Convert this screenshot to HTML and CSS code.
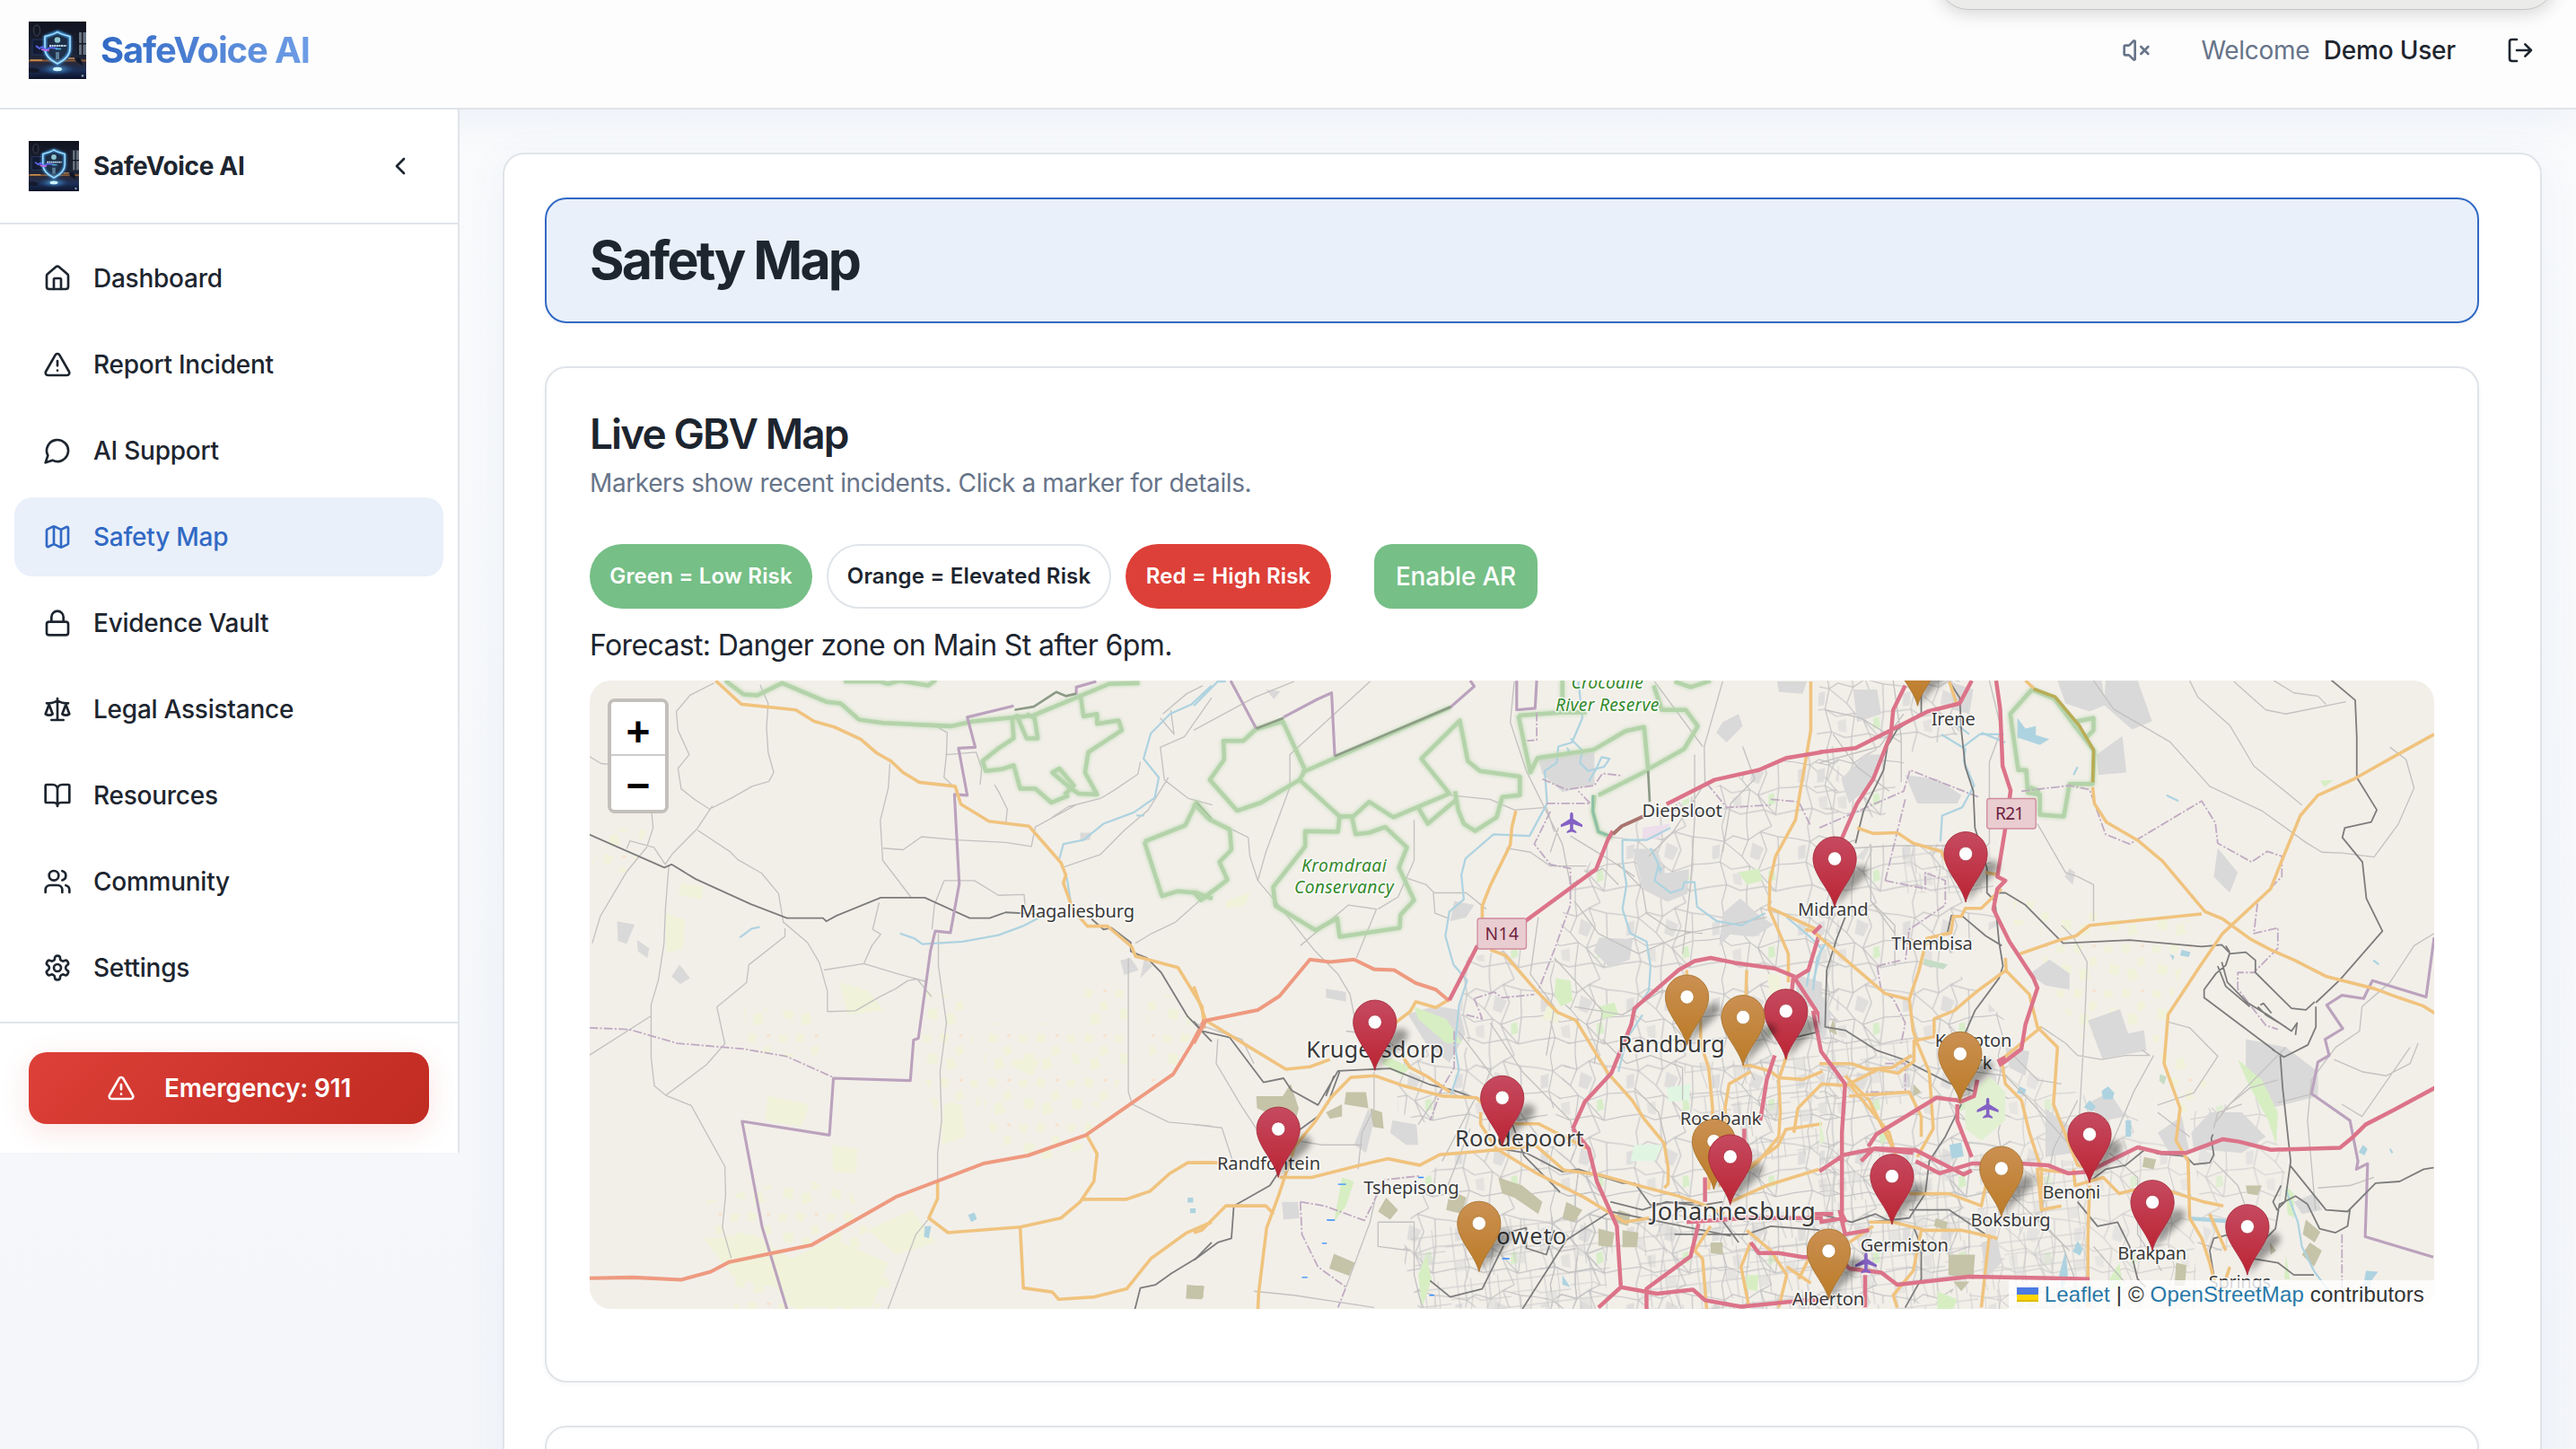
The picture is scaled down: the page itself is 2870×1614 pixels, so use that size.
FILE: index.html
```html
<!DOCTYPE html>
<html lang="en">
<head>
<meta charset="utf-8">
<title>SafeVoice AI - Safety Map</title>
<link rel="stylesheet" href="styles.css">
</head>
<body>
<svg class="defs" width="0" height="0" aria-hidden="true">
  <defs>
    <linearGradient id="room" x1="0" y1="0" x2="0" y2="1">
      <stop offset="0" stop-color="#11131f"/><stop offset=".6" stop-color="#1c2438"/><stop offset=".72" stop-color="#2a2a3a"/><stop offset=".85" stop-color="#1c3058"/><stop offset="1" stop-color="#0b1228"/>
    </linearGradient>
    <radialGradient id="halo"><stop offset="0" stop-color="#4d9be8" stop-opacity=".75"/><stop offset="1" stop-color="#16305c" stop-opacity="0"/></radialGradient>
    <radialGradient id="spot"><stop offset="0" stop-color="#e8fbff"/><stop offset=".3" stop-color="#5ab4f4" stop-opacity=".9"/><stop offset="1" stop-color="#1e5cb0" stop-opacity="0"/></radialGradient>
    <filter id="soft" x="-30%" y="-30%" width="160%" height="160%"><feGaussianBlur stdDeviation="1.3"/></filter>
    <linearGradient id="redPin" x1="0" y1="0" x2="0" y2="1"><stop offset="0" stop-color="#c64a60"/><stop offset="1" stop-color="#bb2433"/></linearGradient>
    <linearGradient id="goldPin" x1="0" y1="0" x2="0" y2="1"><stop offset="0" stop-color="#cb9052"/><stop offset="1" stop-color="#bb7b27"/></linearGradient>
    <filter id="pinBlur" x="-40%" y="-40%" width="180%" height="180%"><feGaussianBlur stdDeviation="8"/></filter>
    <symbol id="logo" viewBox="0 0 64 64">
      <rect width="64" height="64" fill="url(#room)"/>
      <ellipse cx="9" cy="10" rx="3.6" ry="6" fill="none" stroke="#343844" stroke-width="1.4"/>
      <rect x="4" y="20" width="16" height="17" fill="#131b33" stroke="#2c3c66" stroke-width=".8"/>
      <path d="M54 12h10v25h-10z" fill="#66717f"/><path d="M54 12h2v25h-2zM59 12h1.4v25H59zM54 24h10v1.4H54z" fill="#141824"/>
      <path d="M0 42.500h64v2H0z" fill="#8d5b35"/><path d="M2 43h13M44 41h7" stroke="#d39551" stroke-width="1.300"/>
      <path d="M52 44c0-6 7-6 8 5z" fill="#111725"/>
      <ellipse cx="32" cy="30" rx="23" ry="24" fill="url(#halo)" opacity=".45"/>
      <ellipse cx="32" cy="53" rx="20" ry="7" fill="url(#spot)" opacity=".55"/>
      <path d="M32 11.500 46 17v13c0 8-6 13-14 17-8-4-14-9-14-17V17z" fill="#1d2f44" fill-opacity=".6" stroke="#4aa9f5" stroke-width="3" filter="url(#soft)"/>
      <path d="M32 11.500c4 3 9 4 14 5v13.500c0 8-6 13-14 17-8-4-14-9-14-17V16.500c5-1 10-2 14-5z" fill="none" stroke="#a9e2ff" stroke-width="1.500"/>
      <path d="M8 27l4 3 3-2 4 4 5-3 8 1" fill="none" stroke="#5b68ee" stroke-width="2"/><path d="M14 31l4 1 5 0" stroke="#d96be0" stroke-width="1.600" fill="none"/>
      <circle cx="32" cy="20.500" r="3.300" fill="#8fc7cf"/><path d="M23 27h19" stroke="#c2dff0" stroke-width="2.200" stroke-dasharray="2 .6"/><path d="M30 30.500h6" stroke="#51b6de" stroke-width="1.500"/>
      <path d="M30 34h4v8h-4z" fill="#5c7f98"/><ellipse cx="32" cy="53" rx="5" ry="2.200" fill="#cdf4ff"/>
      <circle cx="60" cy="60.500" r="1.400" fill="#8290ad"/>
      <path d="M0 52c5-1 10 0 12 2l-1 3H0z" fill="#141a2c"/>
    </symbol>
    <g id="pinShape"><path d="M0 0C-10-42-54-78-54-119a54 54 0 0 1 108 0C54-78 10-42 0 0z"/></g>
    <g id="shadow"><path d="M0 0C14-36 16-66 36-88c18-20 40-18 46-4 6 18-40 44-60 70z" fill="#000" opacity=".36" filter="url(#pinBlur)"/></g>
    <g id="red"><use href="#shadow"/><use href="#pinShape" fill="url(#redPin)" stroke="#a52b3b" stroke-width="2"/><circle cy="-119" r="17" fill="#fff" stroke="#a52b3b" stroke-width="1.500"/></g>
    <g id="gold"><use href="#shadow"/><use href="#pinShape" fill="url(#goldPin)" stroke="#a9752f" stroke-width="2"/><circle cy="-119" r="17" fill="#fff" stroke="#a9752f" stroke-width="1.500"/></g>
    <path id="plane" d="M0-25c3 0 4 4 4 8v8l23 14v6L4 4v12l8 6v4L0 23l-12 3v-4l8-6V4l-23 7V5L-4-9v-8c0-4 1-8 4-8z" fill="#8461c4"/>
    <pattern id="streets" width="214" height="188" patternUnits="userSpaceOnUse">
      <path d="M110 40l30 14-14 30-22-8zM10 50l20-6-2 34-18 4z" fill="#dfdedd"/><path d="M150 110l14-4 4 26-18 6z" fill="#d8eec9"/><path d="M60 118l22-6 2 34-20-4z" fill="#e4e2df"/>
      <path d="M0 30l40 8 22-14 38 10 30-20 44 12 40 4M0 92l30-4 28 18 46-8 20 14 52-18 38-2M0 150l46-6 34 14 60-10 28 12 46-10M34 0l6 38-10 50 16 56-12 44M96 0l4 34-16 40 20 24-8 60 0 30M158 0l-28 14 16 44-22 54 16 36 18 40M174 26l2 68-8 66M40 38l44 36M124 112l44 48" fill="none" stroke="#c4c4c5" stroke-width="2.600"/>
    </pattern>
    <pattern id="blocks" width="150" height="130" patternUnits="userSpaceOnUse" patternTransform="rotate(-7)">
      <path d="M90 60h24v24H90zM22 86h24v24H22z" fill="#dedddb"/><path d="M0 18h150M0 48h60l14 10h76M0 84h150M20 0v130M54 0v48l-8 36v46M88 18v66l10 46M122 0v58l-8 26v46" fill="none" stroke="#bebec0" stroke-width="2.600"/>
    </pattern>
    <pattern id="farms" width="120" height="110" patternUnits="userSpaceOnUse"><path d="M6 10h24l-4 18H8zM52 4l22 6-6 20-18-4zM88 40l18-4 4 20-20 6zM20 54l26 4-4 26-24-6zM64 70l20-6 8 26-26 6z" fill="#f0f2da"/><path d="M98 8h8v6h-8z" fill="#f8dfc7"/></pattern>
  </defs>
</svg>

<header class="topbar">
  <div class="brand"><svg class="brand-logo" viewBox="0 0 64 64"><use href="#logo"/></svg><span class="brand-name">SafeVoice AI</span></div>
  <div class="account">
    <svg class="icon muted" viewBox="0 0 24 24"><path d="M11 4.702a.705.705 0 0 0-1.203-.498L6.413 7.587A1.400 1.400 0 0 1 5.416 8H3a1 1 0 0 0-1 1v6a1 1 0 0 0 1 1h2.416a1.400 1.400 0 0 1 .997.413l3.383 3.384A.705.705 0 0 0 11 19.298z"/><path d="m22 9-6 6M16 9l6 6"/></svg>
    <p class="welcome">Welcome <strong>Demo User</strong></p>
    <svg class="icon" viewBox="0 0 24 24"><path d="M9 21H5a2 2 0 0 1-2-2V5a2 2 0 0 1 2-2h4M16 17l5-5-5-5M21 12H9"/></svg>
  </div>
  <div class="popover"></div>
</header>

<div class="shell">
  <aside class="sidebar">
    <div class="side-head"><svg class="side-logo" viewBox="0 0 64 64"><use href="#logo"/></svg><span class="side-name">SafeVoice AI</span><svg class="icon" viewBox="0 0 24 24"><path d="m15 18-6-6 6-6"/></svg></div>
    <nav class="nav">
      <a class="nav-item"><svg class="icon" viewBox="0 0 24 24"><path d="M15 21v-8a1 1 0 0 0-1-1h-4a1 1 0 0 0-1 1v8"/><path d="M3 10a2 2 0 0 1 .709-1.528l7-5.999a2 2 0 0 1 2.582 0l7 5.999A2 2 0 0 1 21 10v9a2 2 0 0 1-2 2H5a2 2 0 0 1-2-2z"/></svg>Dashboard</a>
      <a class="nav-item"><svg class="icon" viewBox="0 0 24 24"><path d="m21.730 18-8-14a2 2 0 0 0-3.480 0l-8 14A2 2 0 0 0 4 21h16a2 2 0 0 0 1.730-3M12 9v4M12 17h.01"/></svg>Report Incident</a>
      <a class="nav-item"><svg class="icon" viewBox="0 0 24 24"><path d="M7.900 20A9 9 0 1 0 4 16.100L2 22Z"/></svg>AI Support</a>
      <a class="nav-item active"><svg class="icon" viewBox="0 0 24 24"><path d="M14.106 5.553a2 2 0 0 0 1.788 0l3.659-1.830A1 1 0 0 1 21 4.619v12.764a1 1 0 0 1-.553.894l-4.553 2.277a2 2 0 0 1-1.788 0l-4.212-2.106a2 2 0 0 0-1.788 0l-3.659 1.830A1 1 0 0 1 3 19.381V6.618a1 1 0 0 1 .553-.894l4.553-2.277a2 2 0 0 1 1.788 0zM15 5.764v15M9 3.236v15"/></svg>Safety Map</a>
      <a class="nav-item"><svg class="icon" viewBox="0 0 24 24"><rect width="18" height="11" x="3" y="11" rx="2"/><path d="M7 11V7a5 5 0 0 1 10 0v4"/></svg>Evidence Vault</a>
      <a class="nav-item"><svg class="icon" viewBox="0 0 24 24"><path d="m16 16 3-8 3 8c-.87.65-1.920 1-3 1s-2.130-.35-3-1ZM2 16l3-8 3 8c-.87.65-1.920 1-3 1s-2.130-.35-3-1ZM7 21h10M12 3v18M3 7h2c2 0 5-1 7-2 2 1 5 2 7 2h2"/></svg>Legal Assistance</a>
      <a class="nav-item"><svg class="icon" viewBox="0 0 24 24"><path d="M12 7v14M3 18a1 1 0 0 1-1-1V4a1 1 0 0 1 1-1h5a4 4 0 0 1 4 4 4 4 0 0 1 4-4h5a1 1 0 0 1 1 1v13a1 1 0 0 1-1 1h-6a3 3 0 0 0-3 3 3 3 0 0 0-3-3z"/></svg>Resources</a>
      <a class="nav-item"><svg class="icon" viewBox="0 0 24 24"><path d="M16 21v-2a4 4 0 0 0-4-4H6a4 4 0 0 0-4 4v2"/><circle cx="9" cy="7" r="4"/><path d="M22 21v-2a4 4 0 0 0-3-3.870M16 3.130a4 4 0 0 1 0 7.750"/></svg>Community</a>
      <a class="nav-item"><svg class="icon" viewBox="0 0 24 24"><path d="M12.220 2h-.44a2 2 0 0 0-2 2v.18a2 2 0 0 1-1 1.730l-.43.25a2 2 0 0 1-2 0l-.15-.08a2 2 0 0 0-2.730.73l-.22.38a2 2 0 0 0 .73 2.730l.15.1a2 2 0 0 1 1 1.720v.51a2 2 0 0 1-1 1.740l-.15.09a2 2 0 0 0-.73 2.730l.22.38a2 2 0 0 0 2.730.73l.15-.08a2 2 0 0 1 2 0l.43.25a2 2 0 0 1 1 1.730V20a2 2 0 0 0 2 2h.44a2 2 0 0 0 2-2v-.18a2 2 0 0 1 1-1.730l.43-.25a2 2 0 0 1 2 0l.15.08a2 2 0 0 0 2.730-.73l.22-.39a2 2 0 0 0-.73-2.730l-.15-.08a2 2 0 0 1-1-1.740v-.5a2 2 0 0 1 1-1.740l.15-.09a2 2 0 0 0 .73-2.730l-.22-.38a2 2 0 0 0-2.730-.73l-.15.08a2 2 0 0 1-2 0l-.43-.25a2 2 0 0 1-1-1.730V4a2 2 0 0 0-2-2z"/><circle cx="12" cy="12" r="3"/></svg>Settings</a>
    </nav>
    <div class="side-foot"><button class="emergency"><svg class="icon" viewBox="0 0 24 24"><path d="m21.730 18-8-14a2 2 0 0 0-3.480 0l-8 14A2 2 0 0 0 4 21h16a2 2 0 0 0 1.730-3M12 9v4M12 17h.01"/></svg>Emergency: 911</button></div>
  </aside>

  <main class="content">
    <section class="page-card">
      <div class="panel hero"><h1>Safety Map</h1></div>
      <div class="panel map-panel">
        <h2>Live GBV Map</h2>
        <p class="sub">Markers show recent incidents. Click a marker for details.</p>
        <div class="legend">
          <span class="badge low">Green = Low Risk</span><span class="badge mid">Orange = Elevated Risk</span><span class="badge high">Red = High Risk</span>
          <button class="ar">Enable AR</button>
        </div>
        <p class="forecast">Forecast: Danger zone on Main St after 6pm.</p>
        <div class="map">
          <svg class="map-art" viewBox="0 0 2055 700" width="2055" height="700">
            <!-- western farmland -->
            <g transform="translate(-7 -8) scale(.4464 .4528)" class="tile">
              <path fill="url(#farms)" d="M300 1300l240-60 130 40 110 250-60 40H380zM840 780l120 20 30 260-100 60-60-200zM1000 860l220 0 60 300-200 60-80-120zM60 380l100 0-40 110-110 0zM400 820l220 20-40 110-180-20zM1250 760l110 0 0 200-60 120-60-40zM1400 780l100 20 30 120-110 100z"/>
              <path class="farm" d="M244 515l56 10-4 32-58-12zM205 590l48 16-4 70-42 12zM640 760l70 20 40 50-90 10zM460 1040l104 20-20 56-90-16zM620 1160l64 10-4 60-56-4zM300 1390l120-10 100 60 100-50 140 60-40 110H520l-40-50-100-20zM820 1320l60 80-100 30-70-60zM1070 950l70 0-20 40-50-24zM900 1060l44 0 10 80-60 20z"/>
              <path class="grey" d="M84 610l44 8-20 48-22-8zM134 656l30 20-4 24-24-16zM240 716l26 34-24 14-22-18zM1240 392l28 0-4 18-24 2zM1340 706l26-6 20 30-36 12zM1400 700l20 20-30 30z"/>
              <path class="olive" d="M1506 1504l44 4-6 32-40-2z"/>
              <g class="minor">
                <path d="M326 24l-60 30-34 40 4 46 28 60-28 34 8 50 36 28 35 22 56-28 50-28 42-12 12-22-14-50-4-60 4-60-20-46M14 204l30 18 24 2M170 340l4 40-16 48-50 60-66 110-20 66M108 432l8-20 60 16 28 42 18-26 62-62 38-56M285 386l80 52 20 20 60 34 42 50 12 70 60 50 30 50 20 70 0 50 70-2 60-34 40-20 30-20 24-4 36 44M213 475l-8 100-4 90-14 90-18 60 0 130 8 70 30 24 62 24 84 150 2 70-8 80 22 76M14 940l156-98M207 1037l100-74 46-52-20-90 74-60 6-44 90-70 0-20M600 730l100-16 80 24 74 20M700 714l20-44 22-28-20-12 16-66M765 222l-4 60-20 80 6 98 70 90M748 430l50 4 46-32 90 8 120 6 64 10 10-48 104-56M880 130l28 16-2 54-6 56 24 22M904 200l76-6 14 40-4 40M1026 274l12 20 20 40-4 36M900 510l76 0 60 36 64-2 4 50M900 510l-24 60-6 60M886 640l0 80 20 140-16 120 4 120-10 80 0 74M860 1344l-30 36-70 184M1390 218l-6 30-60 40-34 20-80 20-40 26M1568 60l-68 96-60 26 10 80 60 46 60 16M1360 700l0 330 10 30 90 44 108 10M1378 664l40-24 60-28 90-80M1200 476l90-30 60-60 60-50 50-80M1446 100l60-50 40-20M1440 110l34 40-8-60"/>
              </g>
              <path class="rail" d="M14 396l188 82 18-8 60 36 138 62 90 34 90 0 8 8 26-14 110-44 110 0 112 50 50 0 40-14 80 4M1268 604l30 26 20-4 48 36 0 22 40 16 36 36 66 108 60 62M1568 1400l-40 40-60 36-40 28-38 8-14 54"/>
              <path class="water" d="M1568 30l-50 46-54 24-28 28-20 20-18 62 38 46-10 50-52 36-76 28-50 40-50 10-10 36M790 640l36 12 20 14 100-6 90-16 60-22 40-20M1206 500l10 60M1380 350l20 0M390 650l30-22 20-4"/>
              <path class="lake" d="M960 1332l16-6 6 16-14 8zM852 1360l16 0-6 30-12-4zM1508 1290h14v12h-14zM1514 1316h14v12h-14z"/>
              <g class="park"><path d="M354 18l46 34 34 2 62-30 110 46 36 4 46 40 60 8 170 8 54-12 150-14 190-78 76-2M650 20l90 0 20 6 30-8 70 12 20-14M1070 110l4 50-40 26-38 30 8 24 40-4 30-10 16 58 38 0 40 34 44-18M1240 50l8 56 34-6 0 24 54-8 8 24-84 54-8 50 30 54-46-2-26-18-40-34 18-10 36 42-14 14-10 8M1080 100l26 60 28 0-8-50-20-10M1400 414l102-40 28-56 34 40M1400 414l44 134 40-12 46 4 40 14"/></g>
              <g class="bound"><path d="M1280 20l-50 14 0 18M1074 80l-116 28 20 74-42 2 22 116-32-2 12 220-22 120-38-4-12 50-30 214-12 4-8 100-192-6-10 140-218-34 50 260 62 202"/></g>
              <path class="darkpark" d="M1076 90l48-8 56-36 24 10 26-6M1530 320l38 40"/>
              <path class="bounddash" d="M14 872l100 4 120 34 166 14 106 18 118 52"/>
              <path class="sec" d="M330 18l64 58 136 14 46 28 50 14 66 30 40 34 36 20 30 28 40 24 90 10 14 44 70 42 100 12 80 90 12 30-6 20 24 66 36 40 50 0 60 50 10 24 106 28 60 96 6 54M884 1248l0 44-22 48 48 36 180-14 102-22 48-40 34-50 8-68-28-50M1244 1294l110 0 60-20 50-44 44-26h60M1090 1362l8 150 72 10 16 18 90-6 80-20 60-74 90-64 62-26"/>
              <path class="trunk" d="M14 1488l110-2 120 6 74-20 46-24 206-42 210-118 218-82 112-20 144-50 218-150 46-74 32-60"/>
            </g>

            <!-- central area -->
            <g transform="translate(673 -8) scale(.4464 .4528)" class="tile">
              <path fill="url(#streets)" d="M930 540l120-150 200-90 300-120 60 0v1384H880l-20-120 60-200-20-140 40-240-40-160z"/>
              <path fill="url(#streets)" d="M640 1180l300-20 100 180-60 220H560l-40-130 40-170zM500 920l190 0 180 180-200 40-160-60z"/>
              <path fill="url(#streets)" d="M680 700l200-40 60 160 0 200-120 140-160-300z"/>
              <path fill="url(#blocks)" d="M540 1380l220-40 200 0 90 60-30 164H560zM1100 1340l460-20v244h-440zM1220 960l340-20v240l-280 40z" opacity=".6"/>
              <path class="grey" d="M860 210l140-16 0 80-80 18-50-44zM1096 432l60 0 20 60 60-10-4 60-50 20-60-30zM1320 590l44-36 50 44 34 20-50 30-60-6-26 30zM1012 650l84 4-8 50-50 20-40-40zM534 838l70-20 60 10 14 60-40 70-60-50zM496 1100l60 10 4 50-30 0-40-30zM330 776l50 8 0 24-50-10zM1456 20h74l-10 30-60-4zM1320 120l40-20 10 30-40 40-26-24zM400 1160l36-90 14 30-20 80zM650 560l50 10-20 30-40 10zM1500 740l68 20v70l-60-20zM220 1300l40 0 4 40-40 4zM180 40l36 4-16 20z"/>
              <path class="olive" d="M156 1040l66 0 20-30 20 60-10 40-60-10-10-20-24-10zM380 1030l50 0 6 40-60-10zM440 1070l30 10 4 40-26-4zM480 1290l30 30-20 24-30-20zM350 1428l52 22-14 32-50-18zM640 1270l40 20-10 40-40-10zM760 1240l60 20 50 40-10 30-60-40-30-10zM1060 1320l30 10-6 30-34-10zM1010 1366l40 10-6 36-34-4zM1070 1370l40 6-4 36-36 0zM0 1506h24v30H0zM930 1300l40 20-20 30-30-10zM330 1080l40-20 0 30-30 6zM1290 1400l30 0 0 30-30-4z"/>
              <path class="green" d="M550 820l80 30 40 60-40 0-70-60zM904 750l36 6 6 50-30 14-16-30zM1010 820l40-10 10 30-40 10zM480 940l60 30-20 20-50-30zM1380 1480l30 0-4 40-30-6zM560 1480l20-50 14 60-24 70zM1360 490l50-10 10 30-40 10zM370 1240l30 10-20 60-30 40z"/>
              <path fill="#e0f6e3" d="M1180 1020l60-10-4 40-50 4zM1100 1160l70 0-20 40-60 0z"/>
              <path class="farm" d="M80 560l60-20-10 30-50 10zM880 820l30 0 0 40-40-10zM1430 740l30 0 10 60-30 0z"/>
              <path fill="#ecdeea" d="M1120 380l70-10-30 36-40 6z"/>
              <g class="minor"><path d="M250 20l-100 40-150 80M440 20l-200 180 0 80-60 160-20 70M160 510l-20-60-4-46-40-20M160 510l60 70 80 100 60 60 30 50 10 50 40 60M406 700l50-120-70-10-120 100M550 360l0 100-40 90-50 30M520 500l60 20 20 20 80 0 50 40M598 540l4 50 36 14M640 300l100 10 60 26 80-6 20 60M800 20l-10 100 40 120 60 120 30 60 20 100 80-40 40 40M1320 20l-46 160 2 90-80 120-60 60M1150 20l120 160M780 430l60 10 50 34 90 0M890 440l20-60M950 560l60 80 100 50 120-50 200-40M1060 470l60 60 10 60 60 40 80 10M1250 200l0 160-10 160-20 170M1370 180l30 80-60 60-20 120M940 400l100 60 60 40M0 860l120 40 30 60M380 880l80 10 60 40M60 900l-4 60 60 100 40 60M0 1110l70 8 30 90M260 1150l60 10 100 0M450 980l0 90-30 60-10 90M460 1350l90 0 0 130 20 80M460 1350l0 60 80 10M150 1520l100 10 200 30M380 1510l60-160 20-90M560 1110l60-90 40 20M620 1200l80-150M690 1120l-60 150M740 860l80 120 120 120 10 50M660 880l200 260M860 600l-20 140 60 80-20 120M900 700l120 130-20 130M950 820l120 20 100-60 60 20M1020 900l60 60 60-20 80 30 0 80M1100 1020l60 60 20 80M1360 860l0 60 40 80"/></g>
              <path class="rail" d="M0 856l20 24 70 16 84 110 50-10 20 30 66 36 50-84 130-6 100 40 60 14 70 26 44 10 30 44 30 80 60 60 30 30M330 1040l20-50M334 1060l30-80M210 1230l-20 30-90 50-6 80-34 10-60 44M770 1170l60 10 90 46 40-6 110 34 30 0 40 54 40-6 70 0M820 1564l110-170 110-70 100 20 200 40M590 1494l50 40 80-20 70-140 40-10 0 50 50 16 20-60M1040 1300l80 20 60-20 80 10 60-10M240 1140l70-50M1200 1380l180 0 60-20 130 10M1480 900l88-20M1300 1320l60 80"/>
              <path class="water" d="M0 80l60-60 20 0M960 20l10 90-26 60-34 10-4 40-30 20 6 80-44 80-90-4-70 60-10 40 6 60-36 30-10 60 20 70 34 40-20 60-10 100 10 60-20 60M940 160l30 30-6 30 20 20 40-10 14-20-20-4-14 30-18 30M1190 380l-60 30-60 0 0 50 10 60-10 60 20 60 40 20 10 60-4 60-40 60M1140 430l20 40-10 40 40 30 30-10 4-16 26 0 6 60 50 36 60 10 60-30M1060 980l20-80 40-60M1480 600l60 50 30 30M1540 700l-10 70"/>
              <path class="lake" d="M930 180l10 10-6 12zM1156 470l14 10-6 14zM920 1480l20 30-20-6z"/>
              <path fill="none" stroke="#2f8cff" stroke-width="3" d="M360 1257h20M332 1345h20M270 1486h14M320 1402h12M560 1240h14M588 1530h12M770 1440h18"/>
              <g class="park"><path d="M74 166l50 0 30-28 68-20 56 120-14 24-96 56-60 20-68-76 36-50zM264 262l100 90 34 0 40-36 60 38 140-58-70-86 96-94 20 100 30 24 100 14 0 46-44 4-14 50-54 34-28-18-14-34-8-46M640 84l-370 160M560 330l24 40 70-58M364 350l-4 40-82-2 0 38-80 100 6 46 100 60 54-30 6 46 150-22 2-32 34-36-38-80 20-50-54-50-40 14-34 4-10-46M0 320l40 40 50 24 4 50-30 30 20 44-66 50-18-20M810 104l110-8 0-80M810 104l30 140 18-36 140-20 80-46 46-10 10 104 90-50 34-56-30-40-60 0-20-60M1200 20l40 14 50-16M1010 300l120-60M920 96l60 0M1000 300l-4 40 14 50 34 14"/></g>
              <path class="darkpark" d="M1134 240l4 76"/><path d="M996 300l0 40 14 50 34 12" fill="none" stroke="#8bbfa7" stroke-width="6"/>
              <g class="bound"><path d="M92 18l64 118M224 108l84-44 36-16 8 156M640 84l60-52-10-14M806 18l0 72 46-4 4-68"/></g>
              <path class="darkpark" d="M156 136l68-26M352 204l290-122"/>
              <path class="bounddash" d="M856 96l0 68-24 2M870 260l60 26 70-10 20-30 50 6M880 320l110 0-30-30M890 340l-40 80 40 50 50 10 0 90-40 110-40 100M700 800l50-16 20 14 80-8M700 800l20 50-40-10M650 880l0 90-30 50-30 80M266 1300l60 10 100 36 50-100 90-10M266 1300l4 80 40 80 70 50-20 50M1280 270l50 60 110-6M1440 310l70 6 30 60"/>
              <path class="sec" d="M804 338l-10 40-4 44-50 100-20 50 0 70M740 680l38 14 80 90 50 50 46 20 80 130 60 66 30 46 50 60 10 60 0 40-10 10M1540 20l0 120-28 160-10 60-50 90-14 60-2 70 48 110 0 70M1436 576l132 60M0 770l30 84 100 60 100 60 60-6 50-18M500 862l40-30 14-24 50 14 34-20M452 990l-60 4-50 50-40 60-50 60-40 120-30 80-20 160-6 130M452 990l70 24 100 26 84 4 50 50M520 940l20 30 40 20 60 40M214 1240l80 0 120-30 70-16 80 16 50-26 100-8 140-14 70 60 90 12 110 30 80 20 60 20 60 26M716 1080l0 30 40 60 100 60 120 60 100 60 60-10M800 1108l60 0 120 60M0 1376l20-6 60-60 100 0 20 20M0 1204h80M1230 730l4 60M1380 730l-2 70-8 150M1265 830l0 80 20 60 10 100-10 200M1480 940l-20 60 4 80-4 60-50 60-60 50-40 10M1370 965l20 0 50 14 20 16 60 4 50-20M1390 980l-54 30-10 60 10 120M1568 1108l-90 14-20 40-70 50-40 30M1340 1300l90-40 130-40M1290 1360l-40 60 20 20 10 124M1380 1370l60 50 40 60-20 80M1390 1400l-24 60 20 100M0 1204l60 0M1540 1430l-30 60M1540 1500l-60-40"/>
              <path class="trunk" d="M0 910l30-56 130-26 54-34 76-90 50 6 60-6 50 24 50 2 54 32 50 16 34 28"/>
              <path class="mot" d="M638 804l70-134M824 612l180-130 30-74 12-20M1180 322l120-60 110-24 70-30 88-14M946 1120l30-66 66-70 50-120 8-40 110-94 40-22 40-8 60 12 100 14 50 20M1500 750l34-20 34-110M1496 750l-4 40M1500 750l60 90 10 40M1450 940l-20 60-16 100M1374 1120l0 60M946 1120l40 50 20 80 50 110 10 150-56 50M1066 1510l90 16 90-10 30 26 90 16 160-16 50 0M1130 1564l0-50 110-80 20-80M1276 1240l0 60M1390 1400l20 26 50 0 60 10 50 0M1230 1350l150-10 190 0"/>
              <path fill="none" stroke="#a9746e" stroke-width="9" d="M1046 396l22-20 54-24"/>
            </g>

            <!-- eastern area -->
            <g transform="translate(1363 -8) scale(.4464 .4528)" class="tile">
              <path fill="url(#farms)" d="M560 580l420 30-60 120-60 180-180 0-100-160zM860 920l60 160 60 0 0-120zM500 560l60 0 0 60-60 0z"/>
              <path fill="url(#streets)" d="M16 18h350l0 130-130 50-60 160-70-10-20 0-86-20zM140 420l300 0 20 200-200 120-240 0-20-180zM16 620h60l300 130 100 100 20 300-160 400H16z"/>
              <path fill="url(#streets)" d="M480 960l300 120 160 100 20 384H400l-80-300zM940 1080l180-40 60 180-40 200-160 0z" opacity=".7"/>
              <path fill="url(#blocks)" d="M16 1180l340-10 60 394H16zM400 1180l250 20 60 364H430zM180 430l190 0 60 110-200 0zM40 900h200l40 160H30z" opacity=".55"/>
              <path class="grey" d="M610 18l110 0 10 60-40 16-60-20zM730 18l80 0 36 100-50 20-70-60zM708 200l64-46 10 90-70 6zM540 740l50-36 50 34 0 40-60-10zM686 854l80-28 20 60 40-8 6 50-110 20zM1010 430l50 60-20 50-40-40zM1080 900l100 20 80 60 0 60-120 30-60-80zM990 1080l80 0 60 60-60 40-120-10-6-40zM230 250l80 10 60 40-10 20-100 0zM580 1070l70 50 0 60-70 10zM680 1060l60-30 40 60-50 10zM1200 1300l50-20 20 40-50 10zM130 200l40 0-30 80-50 40-20-60zM640 480l14 10-6 30-20-20zM420 1400l40-10 10 60-40 40zM860 1130l60-40 20 90-50 0zM480 920l60 10-10 60-40-20zM16 780l30 60-20 60-10 0zM100 40l60 0 10 60-60 20zM340 20l60 20-10 60-40-10z"/>
              <path class="olive" d="M338 1430l66 0-4 60-62-10zM1080 1260l40 0-10 24-26-4zM1230 1344l36 30-14 26-30-20zM1240 1400l30 20-20 40-30-30zM906 1450l26 6-4 50-26 0zM306 1340l30 10-4 20-30-10zM826 1190l30 6-6 24-28-6zM40 880l10-30 10 40zM250 1010l20 20-20 10zM1140 1400l16 20-14 10zM350 1496l40 0-20 24z"/>
              <path class="green" d="M310 1520l50 20-10 24h-40zM740 1490l24-40 10 60-30 6zM1060 950l60 50 40 80-4 80-20-60-50-90zM1180 1260l20 20 0 60-16-10zM1180 1430l10 60-14 0zM160 1120l30 20-20 20zM1266 264l34-2-24 18z"/>
              <path fill="#e2f0d2" d="M380 1050l60-60 40 40 0 70-60 50-40-30zM16 1090l14 60-14 10z"/>
              <path fill="#c5dcc6" d="M276 702l60 14-10 12-50-12zM866 986l16 6-6 20-12-10z"/>
              <path class="lake" d="M510 110l20 26 26-6 0 22 34 10-24 14-56-18zM736 1016l16 16-4 16-24 0-4-20zM516 1016l16 8-6 14-18-6zM690 1050l16 16-10 12-20-10zM340 1160l30-6 6 34-30 6zM1372 1160l12 10-8 16-14-8zM660 1396l14 20-8 16-18-10zM920 680l22 6-4 12-22-4zM1380 1470l30 2-18 24 0 26-24 14zM630 1420l6 60-14 40-8-40zM890 690l12 6-4 10zM780 1100h14v40h-14zM940 1336l90 6 0 10-90-6z"/>
              <path class="water" d="M320 150l60 36-4 30 26 60-30 54-50 20-4 64M376 180l40-30 60 0M882 300l30 14M1398 706l14 10M650 250l10-20M0 760l20-80 14-20M1180 1270l30 80 10 60 30 60 30 40 20 20M1440 1170l6 10"/>
              <g class="minor"><path d="M700 18l50 70 140 80 100 110 130 60 110 78 40 24 50 2 80 10 60-80 40-90-20-70-40-30M940 18l20 40 80 70 60 100 120 96M1050 20l80 70 50 10 150-30M1150 18l50 30 60 8 20 20M560 370l70 120 30 10 40 20 0 90M620 620l30 30 34 60-4 100-6 120-10 170M570 870l60 40 30 30 60 10 60-10 60 0-20-14M880 856l60 16 70 70-60 90-90 30M850 940l-50 90-60 140M1000 1110l40-50 50-40 70-20M1000 1120l10-40 60-20M1240 1036l-80 20M1510 910l-20 50-60 30-60-10-70-30M1490 920l-120 170-50-30M1550 640l-50 30-60 90-70 60-6 60-60 40-60 80-10 100 20 220M1260 1266l80-6 60-20M440 18l30 120-30 80 0 200-20 20M144 420l0 140 60 60 0 100M144 560l60 80M16 440l90-30M100 430l100-6 140 0M16 220l150-40 60-80M30 90l90 20 100 60M50 150l60 80 80 60M200 18l20 140 0 110M660 1050l-60 120-30 160M740 1180l70 60 0 140 60 90M560 1340l60 60 30 80 10 80M700 1410l80 90M480 1270l160 150M340 920l60 60 80 10 60 60 100 110M500 940l60 60 60 10M1000 1200l60 60 30 80-50 60M960 1400l60 20M860 1080l80 60M1180 920l-160 160"/></g>
              <path class="water" d="M0 780l10-80 24-40M350 120l40 30M480 170l-60-24"/>
              <g class="park"><path d="M492 100l54-60 56 22 100 130-4 80-58 0-14 80-60-4 0-50-30-4-4-56-20 0zM650 120l50-10 0 30-20 20-30-34zM540 280l26 10"/></g>
              <path fill="none" stroke="#b9ac55" stroke-width="8" d="M550 38l54 20 60 70 36 60-2 80"/>
              <g class="bound"><path d="M1550 650l-20 146-134-40-22 44-54-8-38 24 40 58-44 26 10 40-28 16-16 78 96 66 20 100-4 20 28-14-6 180 170 50"/></g>
              <path class="bounddash" d="M16 380l210-90 16-52 170 66M520 290l120-14 50 10 40 110 60 24 180-106 34 54 6 50 84 46 40-26 36 12 0 50-60 60-10 80 60-14 0 50-60 60-40 0 0 40 70 90 30 10M1320 1380l0 180M160 720l60-14M160 720l10 60 30 20 30 60-10 50M180 510l50-200M180 510l100 20 0-40 50 20 0 60-90 60-10 80M180 960l50 0 0 70-100 0"/>
              <path class="rail" d="M340 20l26 40 4 80 10 90 20 60 4 90 30 100 0 60 20 20 10 100 10 60-10 30-60 80-40 90M270 18l0 80-60 40-24 40-10 60-50 100-20 80M80 600l-20 50-26 80-4 140 50 8 80 50 60 20 120 60 60 20M370 1060l-40 80-40 60-10 80-40 60-100 10M460 540l20 0 50 30 94 94 166-8 180 16 50-4 20 20-10 30-24 20-30 40 0 20 176 130M1020 710l14 50 50 50 50 30 60 40 14-20-4 30M1010 720l20 50 60 50M1040 690l40-4 24 20 0 30 90 88 36 4 22-20M1030 670l10 16M1255 820l0 50-20 44-60 30-30-20M1166 940l6 80 20 180-14 100-20 20-10-20 20-40M1190 1210l90 110 54 4 70-70 60-4 60-30 25-4M1255 810l60-56 106-120-40-80-10-90-50-60 6-24 66-14 14-30-50-80 0-100-4-90-70-58M335 640l10-44 26 0 60 50 40 24M1110 820l20 20 50 30M1116 816l8-4 20 24M690 1250l40-30 50-10 50-40 30 12 70 6 20 20 40-4 10-20-6-40 4-10M660 1300l50 60 50-10 30 60 20 80 20 20M240 1320l100 0 90 60M16 1330l80 20 60-20 40 20M250 1360l20 50 0 80-40 70M1000 1480l-10-60 10-30 40-10M1340 1320l-6 40-30 16-40-10-30-60-30-20-40 20-10 60-40 40M1100 1440l60 10 40 30 50 0"/>
              <path class="sec" d="M530 18l20 18M698 280l4 40 30 46 80 46 60 50 106 124 44 18 70 50 50 26 60 26 80 40 120 30 60 22 60 20 40 24M516 690l100-34 40-10 34-26 280-28M1550 150l-110 60-90 50-90 40-44 50-54 130-20 50-120 110-56 80-80 120-10 120 40 110-10 80 30 50 4 140 30 50 20 60 20 80M110 380l40 14 60-2 40 26 70 20 20 40M430 490l36 6M470 530l-50 48-40 0-10 20-20 0-6 40-60 14-20 80-24 70-60-14-130-110-50-44-20-4M240 800l10 80 10 30 30 70 10 140-40 70M480 700l2 30-70 50-60 50-50 20 0 44-50 10 0 50-40 30-50-10-80 40-60-4-60 60-10 60M480 730l60 60 20 80 50 50-10 140 60 150 50 10M570 870l-50 40-50 40M470 950l10 60 40 40 20 80 30 90 0 100M90 1010l100 120 20 70M90 1040l150-10 30 60 0 50M80 990l60 60 60 120M16 960l80 0 40 14 60-4 50-30M240 1280l100 0 80 30 20-90 30-30M140 1350l60 0 80 20 90 0 90 20M90 1400l60-40M440 1380l-20 180M650 1220l4 40 70-20 40 40 80-20 130 40 50 10M690 1260l-4 130 0 170M650 1230l-90-10 10 100 50-10M270 1370l-20 100-50 60 10 30M1040 1460l-20 60M1030 1420l-40-90M340 20l20 60"/>
              <path class="mot" d="M16 194l90-10 80-40 100-50 80-20 30-56M230 30l-30 60-6 60-44 110-40 60-40 90M457 18l10 70 6 140 20 60-4 30M480 380l-20 120 20 10-20 20-10 50 40 80 60 90 10 24-30 90-10 60-40 30-16 10M460 955l20-10M410 1000l-8 40-34 14-10-4-50-6-150 90-20 30M360 1060l0 40 36 90M16 1225l60-40 80-16 100 4 120 60 20-10M120 1200l30-30 100 10M256 1200l60 30 80-24 120 0 70 4 50 20 50-4 124-60 60 14 60 0 93-34 40 6 80 20L1315 1167l30-24 34-33L1450 1074 1555 1018M0 640l20-20M0 830l20 100 60 80-8 120 0 200 10 20M66 1320l14 60 60-10M70 1440l20 24 80 10 40 30 180-20 300 6M130 1480l0 80M0 1330l50 0M16 1350l60-10"/>
            </g>

            <g transform="translate(-7 -8) scale(.4464 .4528)" class="labels"><text x="1232" y="600" textLength="287">Magaliesburg</text></g>
            <g transform="translate(673 -8) scale(.4464 .4528)" class="labels">
              <use href="#plane" x="943" y="367"/>
              <g class="reserve"><text x="1032" y="38" textLength="180">Crocodile</text><text x="1032" y="93" textLength="258">River Reserve</text><text x="375" y="488" textLength="212">Kromdraai</text><text x="375" y="542" textLength="248">Conservancy</text></g>
              <text x="1219" y="353" textLength="200">Diepsloot</text>
              <text class="city" x="452" y="946" textLength="343">Krugersdorp</text><text class="city" x="813" y="1164" textLength="322">Roodepoort</text><text class="city" x="1192" y="931" textLength="267">Randburg</text>
              <text x="1315" y="1111" textLength="203">Rosebank</text><text class="city big" x="1346" y="1344" textLength="412">Johannesburg</text><text x="187" y="1221" textLength="258">Randfontein</text><text x="543" y="1282" textLength="238">Tshepisong</text><text class="city" x="826" y="1404" textLength="208">Soweto</text>
              <rect class="shield" x="708" y="603" width="122" height="75" rx="6"/><text class="ref" x="769" y="655" textLength="84">N14</text>
            </g>
            <g transform="translate(1363 -8) scale(.4464 .4528)" class="labels">
              <use href="#plane" x="436" y="1069"/><use href="#plane" x="132" y="1450"/>
              <text x="350" y="129" textLength="110">Irene</text><text x="50" y="597" textLength="176">Midrand</text><text x="297" y="680" textLength="203">Thembisa</text><text x="400" y="918" textLength="192">Kempton</text><text x="400" y="973" textLength="94">Park</text>
              <text x="645" y="1291" textLength="145">Benoni</text><text x="493" y="1361" textLength="200">Boksburg</text><text x="228" y="1422" textLength="220">Germiston</text><text x="846" y="1442" textLength="172">Brakpan</text><text x="38" y="1555" textLength="180">Alberton</text><text x="1065" y="1512" textLength="155">Springs</text>
              <rect class="shield" x="434" y="308" width="122" height="74" rx="6"/><text class="ref" x="491" y="360" textLength="72">R21</text>
            </g>

            <g transform="translate(673 -8) scale(.4464 .4528)">
              <use href="#gold" x="1231" y="915"/><use href="#red" x="1478" y="950"/><use href="#gold" x="1371" y="965"/><use href="#red" x="452" y="977"/><use href="#red" x="770" y="1163"/><use href="#red" x="211" y="1240"/><use href="#gold" x="1298" y="1270"/><use href="#red" x="1339" y="1308"/><use href="#gold" x="712" y="1472"/>
            </g>
            <g transform="translate(1363 -8) scale(.4464 .4528)">
              <use href="#gold" x="261" y="80"/><use href="#red" x="381" y="563"/><use href="#red" x="54" y="575"/><use href="#gold" x="367" y="1055"/><use href="#red" x="690" y="1253"/><use href="#gold" x="470" y="1337"/><use href="#red" x="197" y="1356"/><use href="#red" x="847" y="1420"/><use href="#red" x="1084" y="1480"/><use href="#gold" x="39" y="1540"/>
            </g>
          </svg>
          <div class="zoom"><button>+</button><button>−</button></div>
          <div class="credit"><svg class="flag" viewBox="0 0 12 8"><path fill="#4C7BE1" d="M0 0h12v4H0z"/><path fill="#FFD500" d="M0 4h12v3H0z"/><path fill="#E0BC00" d="M0 7h12v1H0z"/></svg> <a>Leaflet</a> | © <a>OpenStreetMap</a> contributors</div>
        </div>
      </div>
      <div class="panel next-panel"></div>
    </section>
  </main>
</div>
</body>
</html>
```
FILE: styles.css
```css
* { box-sizing: border-box; }
body { margin: 0; width: 2870px; height: 1614px; overflow: hidden; background: linear-gradient(180deg, #fafbfc, #f4f6f9); color: #1d252f; font-family: Inter, "Liberation Sans", sans-serif; font-size: 28px; display: flex; flex-direction: column; }
h1, h2, p { margin: 0; }
button { border: 0; font: inherit; }
.defs { position: absolute; }
.icon { width: 32px; height: 32px; flex: none; fill: none; stroke: currentColor; stroke-width: 2; stroke-linecap: round; stroke-linejoin: round; }
.icon.muted { color: #677489; }

.topbar { position: relative; z-index: 2; height: 122px; flex: none; display: flex; align-items: center; justify-content: space-between; padding: 0 46px 8px 32px; background: #fdfdfd; border-bottom: 2px solid #e0e4e9; box-shadow: 0 8px 48px rgba(49, 106, 196, .08); }
.brand { display: flex; align-items: center; gap: 16px; }
.brand-logo { width: 64px; height: 64px; display: block; }
.brand-name { font-size: 40px; font-weight: 700; line-height: 1.400; letter-spacing: -1.150px; background: linear-gradient(90deg, #3169c4, #6e9de6); -webkit-background-clip: text; background-clip: text; color: transparent; }
.account { display: flex; align-items: center; }
.welcome { margin: 0 56px; color: #677489; letter-spacing: -.3px; }
.welcome strong { margin-left: 8px; color: #1d252f; font-weight: 500; letter-spacing: -.2px; }
.popover { position: absolute; left: 2159px; top: -70px; width: 688px; height: 81px; border-radius: 34px; background: #ebebe9; border: 1px solid #c6c6c6; box-shadow: 0 4px 20px rgba(0, 0, 0, .16); }

.shell { flex: 1; min-height: 0; overflow: hidden; display: flex; align-items: flex-start; }
.sidebar { position: relative; z-index: 3; width: 512px; height: 1162px; flex: none; background: #fff; border-right: 2px solid #e0e4e9; display: flex; flex-direction: column; }
.side-head { height: 128px; display: flex; align-items: center; padding: 0 48px 0 32px; border-bottom: 2px solid #e0e4e9; }
.side-logo { width: 56px; height: 56px; }
.side-name { flex: 1; margin-left: 16px; font-weight: 700; letter-spacing: -.35px; }
.nav { display: flex; flex-direction: column; gap: 8px; padding: 16px; }
.nav-item { height: 88px; display: flex; align-items: center; gap: 24px; padding: 0 32px; border-radius: 20px; font-weight: 500; letter-spacing: -.25px; }
.nav-item.active { background: #e9f0fa; color: #3169c4; }
.side-foot { flex: 1; padding: 32px 32px 0; border-top: 2px solid #e0e4e9; }
.emergency { width: 446px; height: 80px; display: flex; align-items: center; justify-content: center; gap: 32px; border-radius: 20px; color: #fff; font-weight: 600; background: linear-gradient(135deg, #dd4038, #c02b22); box-shadow: 0 8px 32px rgba(220, 64, 56, .14); letter-spacing: -.15px; }

.content { flex: 1; padding: 48px 38px 0 48px; }
.page-card { height: 1500px; padding: 48px 68px 48px 45px; background: #fff; border: 2px solid #e0e4e9; border-radius: 24px; display: flex; flex-direction: column; gap: 48px; box-shadow: 0 8px 48px rgba(49, 106, 196, .06); }
.panel { flex: none; border: 2px solid #e0e4e9; border-radius: 24px; background: #fff; box-shadow: 0 2px 6px rgba(0, 0, 0, .04); }
.hero { height: 140px; padding: 0 48px; background: #e9f0fa; border-color: #3169c4; display: flex; align-items: center; }
h1 { font-size: 59px; font-weight: 700; line-height: 72px; letter-spacing: -2.900px; }
.map-panel { height: 1132px; padding: 47px 48px; }
h2 { font-size: 46px; font-weight: 600; line-height: 52px; letter-spacing: -1.900px; }
.sub { margin-top: 9px; line-height: 40px; color: #677489; letter-spacing: -.39px; }
.legend { display: flex; align-items: center; gap: 16px; margin-top: 48px; }
.badge { height: 72px; padding-bottom: 1px; display: flex; align-items: center; justify-content: center; border-radius: 36px; font-size: 24px; font-weight: 600; letter-spacing: .15px; }
.low { width: 248px; background: #76bf87; color: #fff; }
.mid { width: 317px; border: 2px solid #e0e4e9; }
.high { width: 229px; background: #dd4038; color: #fff; }
.ar { width: 182px; height: 72px; margin-left: 32px; border-radius: 20px; padding: 0; background: #76bf87; color: #fff; font-weight: 500; letter-spacing: -.2px; }
.forecast { margin-top: 18px; height: 46px; line-height: 46px; font-size: 32px; letter-spacing: -.64px; }
.map { position: relative; width: 2055px; height: 700px; margin-top: 16px; border-radius: 24px; overflow: hidden; background: #f2efe9; }
.map-art { display: block; }
.next-panel { height: 300px; }

.zoom { position: absolute; left: 20px; top: 20px; width: 68px; border: 4px solid #c3bfba; border-radius: 8px; background: #fff; display: flex; flex-direction: column; overflow: hidden; }
.zoom button { height: 60px; padding: 6px 0 0; background: #fff; color: #000; font: 700 46px/54px "Liberation Sans", sans-serif; }
.zoom button:first-child { border-bottom: 2px solid #ccc; }
.credit { position: absolute; right: 0; bottom: 0; width: 474px; height: 32px; padding-left: 9px; background: rgba(255, 255, 255, .8); color: #333; font: 24px/32px "Liberation Sans", sans-serif; letter-spacing: .15px; white-space: nowrap; }
.credit a { color: #2878a8; }
.flag { width: 24px; height: 16px; }

.tile path { stroke-linejoin: round; }
.minor path { fill: none; stroke: #c3c2c0; stroke-width: 3; }
.farm { fill: #f0f2da; }
.grey { fill: #dad9d9; }
.olive { fill: #c5c3a8; }
.green { fill: #d7eec3; }
.lake { fill: #aed3e0; }
.rail { fill: none; stroke: #7c7c7c; stroke-width: 4; }
.water { fill: none; stroke: #aed3e0; stroke-width: 5; }
.park path { fill: none; stroke: #b4d3aa; stroke-width: 10; filter: drop-shadow(0 0 5px #b9d9ae); }
.darkpark { fill: none; stroke: #8d9b86; stroke-width: 6; }
.bound path { fill: none; stroke: #bba2bd; stroke-width: 7; }
.bounddash { fill: none; stroke: #c0aac2; stroke-width: 4; stroke-dasharray: 22 5 5 5; }
.sec { fill: none; stroke: #f0c37e; stroke-width: 8; }
.trunk { fill: none; stroke: #ee9a80; stroke-width: 9; }
.mot { fill: none; stroke: #dc7389; stroke-width: 10; }
.labels text { font-family: "Noto Sans", sans-serif; font-size: 45px; text-anchor: middle; fill: #3a3a3a; stroke: rgba(255, 255, 255, .75); stroke-width: 7; stroke-linejoin: round; paint-order: stroke; }
.labels .city { font-size: 57px; }
.labels .big { font-size: 61px; }
.labels .reserve text { fill: #348a2b; font-style: italic; font-size: 43px; }
.labels .ref { fill: #6e2140; font-size: 43px; stroke: none; }
.shield { fill: #e9cdd1; stroke: #cf8b9c; stroke-width: 3; }
```
